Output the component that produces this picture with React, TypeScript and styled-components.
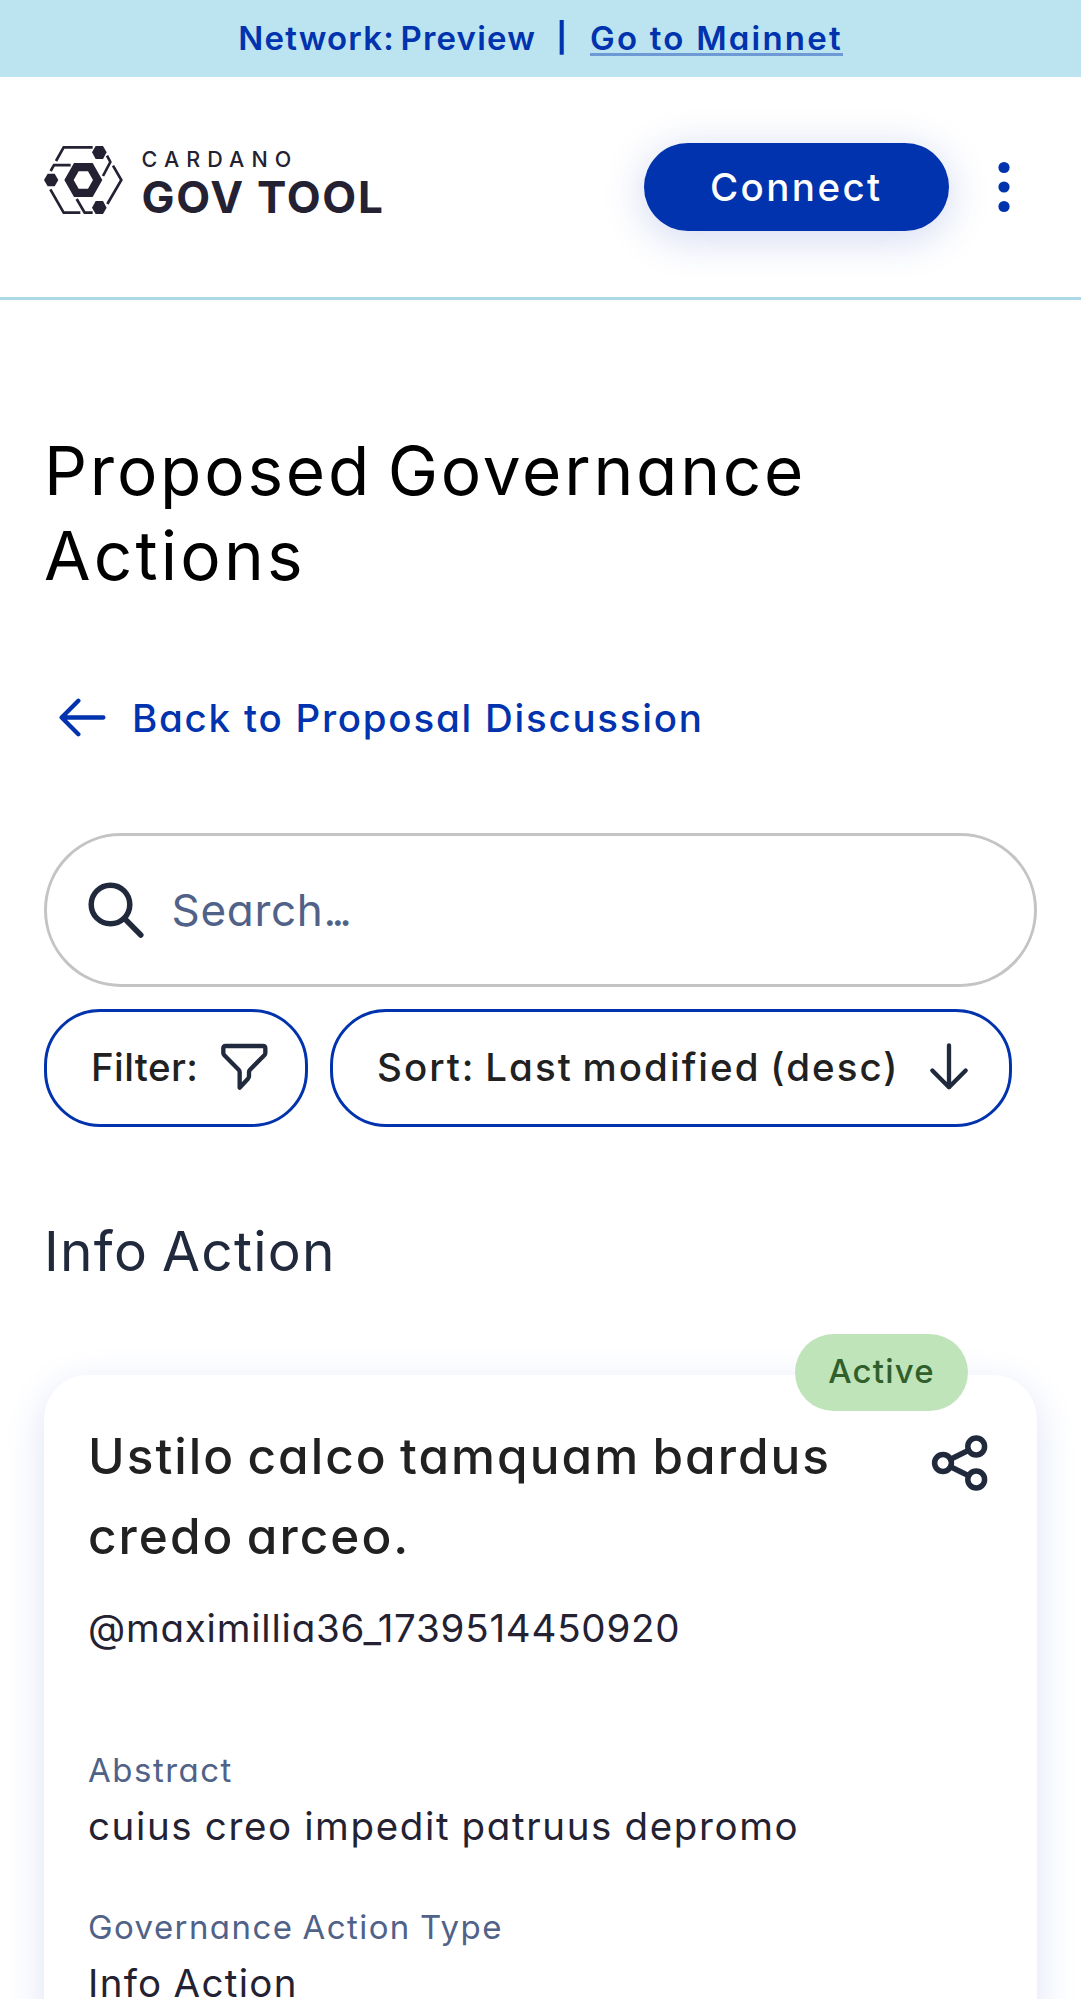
import React from 'react';
import styled, { createGlobalStyle } from 'styled-components';

const colors = {
  primary: '#0033ad',
  ink: '#242232',
  navy: '#212a3d',
  muted: '#506288',
  text: '#212121',
};

const GlobalStyle = createGlobalStyle`
  * { box-sizing: border-box; }
  body {
    margin: 0;
    background: #fff;
    font-family: Inter, 'Open Sans', sans-serif;
    font-feature-settings: 'cv11';
  }
  button, a { font: inherit; font-feature-settings: inherit; }
`;

const Page = styled.div`
  display: flex;
  flex-direction: column;
  height: 1999px;
  overflow: hidden;
  background: #fff;
`;

const Banner = styled.div`
  flex: none;
  display: flex;
  justify-content: center;
  align-items: center;
  height: 77px;
  background: #bce4f0;
  color: ${colors.primary};
  font-size: 33px;
  font-weight: 600;
  line-height: 50px;
  white-space: pre;
`;

const BannerLabel = styled.span`
  margin-bottom: 2px;
  letter-spacing: 1.2px;
  word-spacing: -4px;
`;

const BannerDivider = styled.span`
  display: flex;
  justify-content: center;
  width: 5px;
  margin: 0 26px 2px 23px;
  font-size: 29px;
  font-weight: 700;
`;

const BannerLink = styled.a`
  display: flex;
  align-items: center;
  height: 34px;
  padding-top: 2px;
  border-bottom: 3px solid rgba(0, 51, 173, 0.42);
  color: inherit;
  letter-spacing: 2.2px;
  text-decoration: none;
`;

const Header = styled.header`
  flex: none;
  display: flex;
  align-items: center;
  justify-content: space-between;
  height: 223px;
  padding: 0 70px 0 43.5px;
  border-bottom: 3px solid #add8e6;
`;

const Brand = styled.div`
  display: flex;
  align-items: center;
  gap: 18px;
  margin-top: -14px;
`;

const BrandText = styled.div`
  display: flex;
  flex-direction: column;
  padding-top: 6px;
  color: ${colors.ink};
`;

const BrandTop = styled.span`
  font-size: 21.5px;
  font-weight: 500;
  line-height: 28px;
  letter-spacing: 7.1px;
`;

const BrandBottom = styled.span`
  font-size: 44px;
  font-weight: 650;
  line-height: 48px;
  letter-spacing: 1.75px;
`;

const HeaderActions = styled.div`
  display: flex;
  align-items: center;
  gap: 48px;
`;

const ConnectButton = styled.button`
  width: 305.5px;
  height: 88px;
  border: 0;
  border-radius: 44px;
  padding: 0;
  background: ${colors.primary};
  color: #fff;
  font-size: 38.5px;
  font-weight: 500;
  letter-spacing: 2.4px;
  box-shadow: 0 7px 41px rgba(47, 75, 190, 0.22);
`;

const Main = styled.main`
  flex: none;
  display: flex;
  flex-direction: column;
  padding: 128px 44px 0;
`;

const Title = styled.h1`
  display: flex;
  flex-direction: column;
  margin: 0;
  font-size: 67.5px;
  font-weight: 400;
  line-height: 85.4px;
  word-spacing: -6px;
  color: #000;
`;

const TitleLine = styled.span<{ $tracking: number }>`
  letter-spacing: ${(p) => p.$tracking}px;
  white-space: nowrap;
`;

const BackLink = styled.a`
  display: flex;
  align-items: center;
  gap: 26px;
  margin-top: 90.5px;
  padding-left: 15px;
  height: 58px;
  color: ${colors.primary};
  font-size: 38.5px;
  font-weight: 500;
  letter-spacing: 1.76px;
  text-decoration: none;
`;

const SearchBox = styled.div`
  display: flex;
  align-items: center;
  gap: 25px;
  height: 154px;
  margin-top: 85.5px;
  padding-left: 39.5px;
  border: 3px solid #c4c4c4;
  border-radius: 77px;
  color: ${colors.muted};
  font-size: 44px;
  letter-spacing: 0.7px;
`;

const Dots = styled.span`
  letter-spacing: -4.8px;
`;

const Controls = styled.div`
  display: flex;
  gap: 22px;
  margin-top: 22px;
`;

const ControlButton = styled.button<{ $width: number; $right: number; $tracking: number }>`
  display: flex;
  align-items: center;
  justify-content: space-between;
  width: ${(p) => p.$width}px;
  height: 118px;
  padding: 0 ${(p) => p.$right}px 1px 44px;
  border: 3px solid ${colors.primary};
  border-radius: 56px;
  background: #fff;
  color: ${colors.text};
  font-size: 38.5px;
  font-weight: 500;
  letter-spacing: ${(p) => p.$tracking}px;
  word-spacing: -2.5px;
  white-space: nowrap;
`;

const SectionTitle = styled.h2`
  margin: 91.5px 0 0;
  font-size: 55px;
  font-weight: 400;
  line-height: 66px;
  letter-spacing: 1.3px;
  word-spacing: -3px;
  color: ${colors.navy};
`;

const Card = styled.article`
  position: relative;
  height: 760px;
  margin-top: 90.5px;
  padding: 41px 44px 0;
  border-radius: 44px;
  background: #fff;
  box-shadow: 0 11px 41px #dde3f5;
`;

const Badge = styled.span`
  position: absolute;
  top: -41px;
  right: 69px;
  width: 173px;
  height: 77px;
  border-radius: 38.5px;
  background: #c0e4ba;
  color: #305f2c;
  font-size: 33px;
  font-weight: 500;
  line-height: 75px;
  letter-spacing: 1.2px;
  text-align: center;
`;

const CardHead = styled.div`
  display: flex;
  justify-content: space-between;
  align-items: flex-start;
`;

const CardTitle = styled.h3`
  width: 760px;
  margin: 0;
  font-size: 49.5px;
  font-weight: 500;
  line-height: 80px;
  letter-spacing: 2.04px;
  word-spacing: -3px;
  color: ${colors.text};
`;

const ShareButton = styled.button`
  display: flex;
  margin: 14px 2px 0 0;
  padding: 0;
  border: 0;
  background: none;
`;

const Value = styled.p<{ $top: number; $tracking: number }>`
  margin: ${(p) => p.$top}px 0 0;
  font-size: 38.5px;
  line-height: 58px;
  letter-spacing: ${(p) => p.$tracking}px;
  word-spacing: -1px;
  color: ${colors.ink};
`;

const Label = styled.p<{ $top: number; $tracking: number }>`
  margin: ${(p) => p.$top}px 0 0;
  font-size: 33px;
  line-height: 50px;
  letter-spacing: ${(p) => p.$tracking}px;
  word-spacing: -1.5px;
  color: ${colors.muted};
`;

const LogoMark = () => (
  <svg width="80" height="70" viewBox="42 45 240 210" fill="none" stroke={colors.ink} strokeWidth="8">
    <path d="M78 93 101 52H188" />
    <path d="M62 123 72 105.500H122" />
    <path d="M61 178 101 248H151" />
    <path d="M140 207 164 248H188" />
    <path d="M231 77 241 96 219 138" />
    <path d="M249 107 274 150 232 222" />
    <path
      fill={colors.ink}
      stroke="none"
      fillRule="evenodd"
      d="M132 99H188L217 150 188 201H132L103 150ZM146 124 131 150 146 176H174L189 150 174 124Z"
    />
    <g fill={colors.ink} stroke="none">
      <path d="M53 131H74L85 150 74 169H53L42 150Z" />
      <path d="M197 48H219L230 67 219 87H197L186 67Z" />
      <path d="M197 213H219L230 233 219 252H197L186 233Z" />
    </g>
  </svg>
);

const MenuDots = () => (
  <svg width="14" height="56" viewBox="0 0 14 56" fill={colors.primary}>
    <circle cx="7" cy="8.500" r="5.600" />
    <circle cx="7" cy="28" r="5.600" />
    <circle cx="7" cy="47.500" r="5.600" />
  </svg>
);

const strokeProps = {
  fill: 'none',
  strokeLinecap: 'round' as const,
  strokeLinejoin: 'round' as const,
};

const ArrowLeft = () => (
  <svg width="47" height="40" viewBox="57 24.500 141 120" stroke={colors.primary} strokeWidth="13" {...strokeProps}>
    <path d="M190 83H65M115 33 65 83 115 133" />
  </svg>
);

const ArrowDown = () => (
  <svg width="40" height="50" viewBox="26 37.500 120 150" stroke={colors.navy} strokeWidth="13" {...strokeProps}>
    <path d="M86 48V173M36 123 86 173 136 123" />
  </svg>
);

const Funnel = () => (
  <svg width="48" height="50" viewBox="20 21 144 150" stroke={colors.navy} strokeWidth="13" {...strokeProps}>
    <path d="M34 33H146Q153 33 153 40V54Q153 58 150 61L107 104Q104 107 104 111V124Q104 128 101 131L76 158V111Q76 107 73 104L30 61Q27 58 27 54V40Q27 33 34 33Z" />
  </svg>
);

const Magnifier = () => (
  <svg width="60" height="60" viewBox="86 880 60 60" stroke={colors.navy} strokeWidth="5.500" {...strokeProps}>
    <circle cx="109.500" cy="904.500" r="19.300" />
    <path d="M123.500 918.500 139.800 935" />
  </svg>
);

const ShareIcon = () => (
  <svg width="62" height="66" viewBox="929 1430 62 66" stroke={colors.navy} strokeWidth="5.500" {...strokeProps}>
    <circle cx="943" cy="1463" r="8.400" />
    <circle cx="976.200" cy="1446.500" r="8.400" />
    <circle cx="976.200" cy="1479.500" r="8.400" />
    <path d="M950.500 1459.300 968.700 1450.200M950.500 1466.700 968.700 1475.800" />
  </svg>
);

export default function App() {
  return (
    <>
      <GlobalStyle />
      <Page>
        <Banner>
          <BannerLabel>Network: Preview</BannerLabel>
          <BannerDivider>|</BannerDivider>
          <BannerLink>Go to Mainnet</BannerLink>
        </Banner>
        <Header>
          <Brand>
            <LogoMark />
            <BrandText>
              <BrandTop>CARDANO</BrandTop>
              <BrandBottom>GOV TOOL</BrandBottom>
            </BrandText>
          </Brand>
          <HeaderActions>
            <ConnectButton>Connect</ConnectButton>
            <MenuDots />
          </HeaderActions>
        </Header>
        <Main>
          <Title>
            <TitleLine $tracking={2.75}>Proposed Governance</TitleLine>
            <TitleLine $tracking={3.2}>Actions</TitleLine>
          </Title>
          <BackLink>
            <ArrowLeft />
            Back to Proposal Discussion
          </BackLink>
          <SearchBox>
            <Magnifier />
            <span>
              Search<Dots>...</Dots>
            </span>
          </SearchBox>
          <Controls>
            <ControlButton $width={264} $right={35.6} $tracking={0.4}>
              Filter:
              <Funnel />
            </ControlButton>
            <ControlButton $width={682} $right={40.5} $tracking={2.02}>
              Sort: Last modified (desc)
              <ArrowDown />
            </ControlButton>
          </Controls>
          <SectionTitle>Info Action</SectionTitle>
          <Card>
            <Badge>Active</Badge>
            <CardHead>
              <CardTitle>Ustilo calco tamquam bardus credo arceo.</CardTitle>
              <ShareButton aria-label="Share">
                <ShareIcon />
              </ShareButton>
            </CardHead>
            <Value $top={23} $tracking={0.78}>@maximillia36_1739514450920</Value>
            <Label $top={88} $tracking={1.5}>Abstract</Label>
            <Value $top={2} $tracking={1.63}>cuius creo impedit patruus depromo</Value>
            <Label $top={47} $tracking={1.42}>Governance Action Type</Label>
            <Value $top={2} $tracking={1.3}>Info Action</Value>
          </Card>
        </Main>
      </Page>
    </>
  );
}
